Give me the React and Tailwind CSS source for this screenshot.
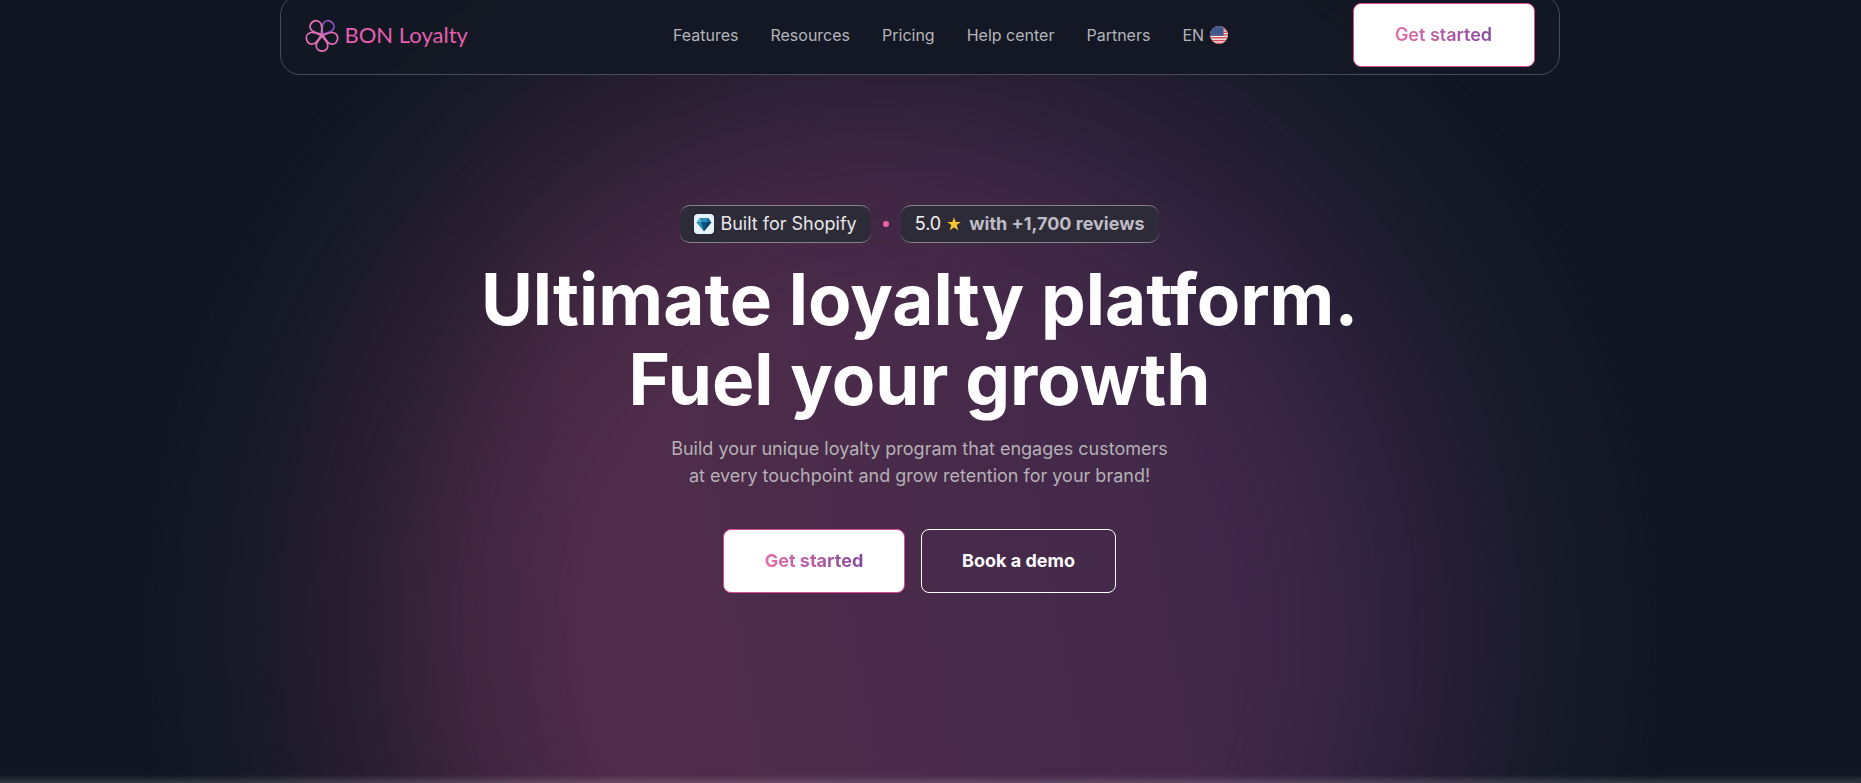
const NAV_LINKS = ["Features", "Resources", "Pricing", "Help center", "Partners"];

function Logo() {
  return (
    <a href="#home" className="flex w-61 shrink-0 items-center gap-1.5 whitespace-nowrap">
      <svg viewBox="0 0 34 34" className="size-[34px]" fill="none" strokeWidth="1.7" aria-hidden="true">
        <defs>
          <linearGradient id="petal" x1="0" y1="0" x2="1" y2="1">
            <stop offset="0" stopColor="#f06bb5" />
            <stop offset="1" stopColor="#d873b8" />
          </linearGradient>
          <path id="petal-shape" d="M17 16 C14.3 13 11.2 9.8 11.2 6.4 C11.2 3 13.8 0.9 17 0.9 C20.2 0.9 22.8 3 22.8 6.4 C22.8 9.8 19.7 13 17 16 Z" />
        </defs>
        <use href="#petal-shape" stroke="#8d52bd" transform="rotate(36 17 17)" />
        <use href="#petal-shape" stroke="url(#petal)" transform="rotate(108 17 17)" />
        <use href="#petal-shape" stroke="url(#petal)" transform="rotate(180 17 17)" />
        <use href="#petal-shape" stroke="url(#petal)" transform="rotate(252 17 17)" />
        <use href="#petal-shape" stroke="url(#petal)" transform="rotate(324 17 17)" />
      </svg>
      <span className="font-['Lato',sans-serif] text-[22px] leading-8 text-[#e45fae]">BON Loyalty</span>
    </a>
  );
}

function FlagIcon() {
  return (
    <svg viewBox="0 0 18 18" className="size-[18px]" aria-hidden="true">
      <defs>
        <clipPath id="flag-circle">
          <circle cx="9" cy="9" r="9" />
        </clipPath>
      </defs>
      <g clipPath="url(#flag-circle)">
        <rect width="18" height="18" fill="#f3eef0" />
        {[0, 1, 2, 3, 4, 5, 6].map((i) => (
          <rect key={i} y={i * 2.77} width="18" height="1.39" fill="#d0454f" />
        ))}
        <rect width="13.5" height="9.7" fill="#3b5288" />
        <g fill="#8fa2cc">
          {[2, 4.5, 7, 9.5, 12].map((x) =>
            [1.5, 3.8, 6.1, 8.4].map((y) => <circle key={x + "-" + y} cx={x} cy={y} r="0.45" />)
          )}
        </g>
      </g>
    </svg>
  );
}

function DiamondIcon() {
  return (
    <svg viewBox="0 0 20 20" className="size-5" aria-hidden="true">
      <rect width="20" height="20" rx="4" fill="#e6f3fd" />
      <path d="M6 4h8l3.4 4.2L10 17.2 2.6 8.2z" fill="#12618c" />
      <path d="M6 4h8l-1.2 4.2H7.2z" fill="#2e8fb8" />
      <path d="M6 4 2.6 8.2h4.6z" fill="#5fb9d6" />
      <path d="M14 4l3.4 4.2h-4.6z" fill="#1c6f9b" />
      <path d="M2.6 8.2h4.6L10 17.2z" fill="#2b93b8" />
      <path d="M7.2 8.2h5.6L10 17.2z" fill="#0f5580" />
      <path d="M12.8 8.2h4.6L10 17.2z" fill="#0b3f66" />
    </svg>
  );
}

function StarIcon() {
  return (
    <svg viewBox="0 0 14 14" className="size-3.5" aria-hidden="true">
      <path d="M7 .2l1.7 4.8h5.1L9.7 8.1l1.6 5.3L7 10.2l-4.3 3.2 1.6-5.3L.2 5h5.1z" fill="#fcc42f" />
    </svg>
  );
}

function PrimaryButton({ weight }) {
  return (
    <button
      type="button"
      className="h-16 w-[182px] shrink-0 rounded-lg border border-[#d8508f] bg-white text-lg"
    >
      <span className={`bg-linear-to-r from-[#e56fa9] to-[#84489b] bg-clip-text text-transparent ${weight}`}>
        Get started
      </span>
    </button>
  );
}

export default function App() {
  return (
    <div className="relative isolate flex min-h-screen flex-col overflow-hidden bg-[#101722] pr-5.5 font-['Inter',sans-serif] text-white">
      <div
        aria-hidden="true"
        className="absolute inset-0 -z-10 bg-[linear-gradient(80deg,#40253f_10%,#502c4a_32%,#482a4a_50%,#40284a_65%,#3a2747_90%)] [mask-image:radial-gradient(770px_800px_at_48.5%_630px,#000_0%,#000_42%,rgba(0,0,0,0.85)_55%,rgba(0,0,0,0.5)_70%,rgba(0,0,0,0.18)_85%,transparent_100%)]"
      />
      <div
        aria-hidden="true"
        className="absolute inset-x-0 bottom-0 -z-10 h-2 bg-linear-to-b from-transparent to-white/15"
      />

      <header className="mx-auto -mt-[5px] flex w-full max-w-7xl items-center justify-between rounded-[20px] border border-[#474b5b] bg-[#131824]/95 px-6 py-[7px]">
        <Logo />
        <nav aria-label="Main" className="flex items-center gap-8 text-base text-[#b4b4ba]">
          {NAV_LINKS.map((label) => (
            <a key={label} href="#" className="whitespace-nowrap">
              {label}
            </a>
          ))}
          <button type="button" className="flex items-center gap-1.5">
            EN
            <FlagIcon />
          </button>
        </nav>
        <PrimaryButton weight="font-semibold" />
      </header>

      <main className="flex flex-col items-center pt-[130px] text-center">
        <div className="flex items-center gap-3 text-lg">
          <div className="flex h-[38px] items-center gap-1.5 rounded-[10px] border-y border-[#85818d] bg-[#2d2b38] px-3.5 text-[#e9e6ea]">
            <DiamondIcon />
            Built for Shopify
          </div>
          <span className="size-1.5 rounded-full bg-[#ee5fae]" />
          <div className="flex h-[38px] items-center rounded-[10px] border-y border-[#85818d] bg-[#2d2b38] px-3.5 text-[#f4f3f5]">
            5.0
            <span className="mr-2 ml-1.5">
              <StarIcon />
            </span>
            <strong className="font-bold text-[#bfbcc5]">with +1,700 reviews</strong>
          </div>
        </div>

        <h1 className="mt-4 text-[71px] leading-20 font-bold">
          <span className="block">Ultimate loyalty platform.</span>
          <span className="block">Fuel your growth</span>
        </h1>

        <p className="mt-4 text-lg leading-[27px] text-[#b5b1b6]">
          Build your unique loyalty program that engages customers
          <br />
          at every touchpoint and grow retention for your brand!
        </p>

        <div className="mt-10 flex gap-4">
          <PrimaryButton weight="font-bold" />
          <button type="button" className="h-16 w-[195px] rounded-lg border border-white text-lg font-bold">
            Book a demo
          </button>
        </div>
      </main>
    </div>
  );
}
